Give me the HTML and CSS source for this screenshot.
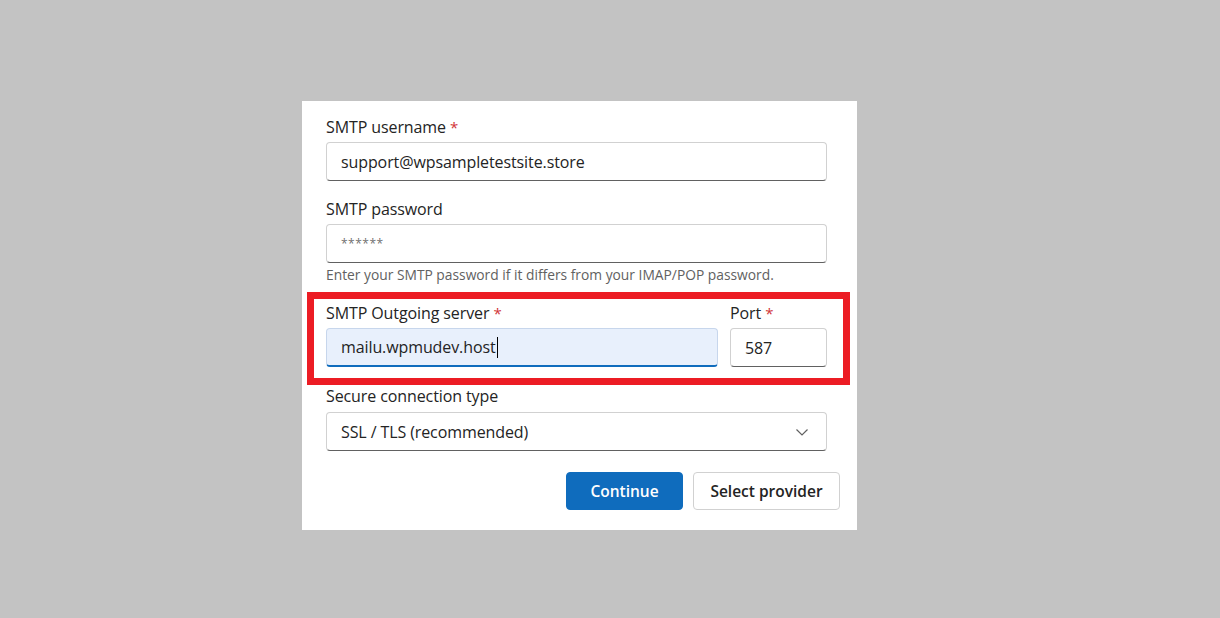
FILE: index.html
```html
<!DOCTYPE html>
<html>
<head>
<meta charset="utf-8">
<link rel="stylesheet" href="styles.css">
</head>
<body>
<div class="stage">
  <div class="panel">
    <div class="fields">
      <div class="field">
        <label class="label">SMTP username <span class="req">*</span></label>
        <div class="input">support@wpsampletestsite.store</div>
      </div>
      <div class="field field-tight">
        <label class="label">SMTP password</label>
        <div class="input"><span class="placeholder">******</span></div>
        <div class="hint">Enter your SMTP password if it differs from your IMAP/POP password.</div>
      </div>
      <div class="field row">
        <div class="col col-grow">
          <label class="label">SMTP Outgoing server <span class="req">*</span></label>
          <div class="input input-focus">mailu.wpmudev.host<span class="caret"></span></div>
        </div>
        <div class="col col-port">
          <label class="label">Port <span class="req">*</span></label>
          <div class="input">587</div>
        </div>
        <div class="highlight"></div>
      </div>
      <div class="field field-last">
        <label class="label label-select">Secure connection type</label>
        <div class="input select">
          <span>SSL / TLS (recommended)</span>
          <svg class="chev" width="16" height="16" viewBox="0 0 16 16"><path d="M2.5 5.5 L8 11 L13.5 5.5" fill="none" stroke="#616161" stroke-width="1.2"/></svg>
        </div>
      </div>
    </div>
    <div class="actions">
      <button class="btn btn-primary">Continue</button>
      <button class="btn btn-secondary">Select provider</button>
    </div>
  </div>
</div>
</body>
</html>
```
FILE: styles.css
```css
html, body {
  margin: 0;
  padding: 0;
  background: #c3c3c3;
}
body {
  font-family: "Open Sans", "Noto Sans", sans-serif;
  color: #242424;
}
.stage {
  width: 1220px;
  height: 618px;
  padding-top: 101px;
  padding-left: 302px;
  box-sizing: border-box;
}
.panel {
  width: 555px;
  height: 429px;
  box-sizing: border-box;
  background: #ffffff;
  padding: 15px 17px 20px 24px;
  position: relative;
}
.fields {
  width: 501px;
}
.field {
  margin-bottom: 17px;
}
.field-tight {
  margin-bottom: 18px;
}
.field.row {
  margin-bottom: 18px;
}
.field-last {
  margin-bottom: 21px;
}
.label {
  display: block;
  font-size: 16px;
  line-height: 22px;
  margin-bottom: 4px;
  color: #242424;
  letter-spacing: -0.1px;
}
.label-select {
  margin-bottom: 5px;
}
.req {
  color: #d13438;
  font-size: 15px;
}
.input {
  height: 39px;
  box-sizing: border-box;
  border: 1px solid #d1d1d1;
  border-bottom-color: #616161;
  border-radius: 4px;
  padding: 0 14px;
  font-size: 16px;
  display: flex;
  align-items: center;
  background: #fff;
  letter-spacing: -0.1px;
}
.placeholder {
  color: #707070;
  font-size: 12px;
  letter-spacing: 0.5px;
}
.hint {
  font-size: 13.8px;
  line-height: 18px;
  color: #616161;
  margin-top: 3px;
}
.row {
  display: flex;
  gap: 12px;
  position: relative;
}
.col-grow {
  flex: 1;
}
.col-port {
  width: 97px;
}
.col-port .input {
  padding-left: 14px;
}
.input-focus {
  background: #e8f0fc;
  border-color: #c7d6ec;
  border-bottom: 2px solid #0f6cbd;
}
.caret {
  display: inline-block;
  width: 1px;
  height: 21px;
  background: #000;
  margin-left: 1px;
}
.select {
  justify-content: space-between;
  padding-right: 16px;
}
.chev {
  display: block;
}
.highlight {
  position: absolute;
  left: -19px;
  top: -10px;
  width: 543px;
  height: 93px;
  box-sizing: border-box;
  border: 7px solid #ec1c24;
  pointer-events: none;
}
.actions {
  display: flex;
  justify-content: flex-end;
  gap: 10px;
}
.btn {
  height: 38px;
  box-sizing: border-box;
  border-radius: 4px;
  font-family: "Open Sans", "Noto Sans", sans-serif;
  font-size: 15.5px;
  font-weight: 600;
  padding: 0;
  cursor: pointer;
}
.btn-primary {
  width: 117px;
  background: #0f6cbd;
  color: #fff;
  border: 1px solid #0f6cbd;
}
.btn-secondary {
  width: 147px;
  background: #fff;
  color: #242424;
  border: 1px solid #d1d1d1;
}
```
